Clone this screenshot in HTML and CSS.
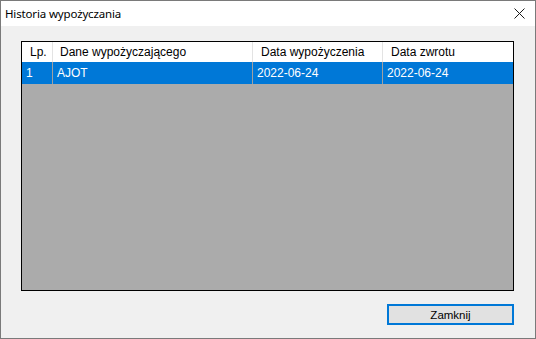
FILE: index.html
```html
<!DOCTYPE html>
<html lang="pl">
<head>
<meta charset="utf-8">
<title>Historia wypożyczania</title>
<link rel="stylesheet" href="styles.css">
</head>
<body>
<div class="window">
  <div class="titlebar">
    <span class="title">Historia wypożyczania</span>
    <svg class="close" width="11" height="11" viewBox="0 0 11 11"><path d="M0.5 0.5 L10.5 10.5 M10.5 0.5 L0.5 10.5" stroke="#1a1a1a" stroke-width="1" fill="none"/></svg>
  </div>
  <div class="content">
    <div class="grid">
      <div class="row header">
        <div class="cell c1 hc-lp">Lp.</div>
        <div class="cell c2">Dane wypożyczającego</div>
        <div class="cell c3">Data wypożyczenia</div>
        <div class="cell c4 last">Data zwrotu</div>
      </div>
      <div class="row data selected">
        <div class="cell c1">1</div>
        <div class="cell c2">AJOT</div>
        <div class="cell c3">2022-06-24</div>
        <div class="cell c4 last">2022-06-24</div>
      </div>
    </div>
    <div class="buttons">
      <button class="btn">Zamknij</button>
    </div>
  </div>
</div>
</body>
</html>
```
FILE: styles.css
```css
* { box-sizing: border-box; }
html, body { margin: 0; padding: 0; }
body { width: 536px; height: 339px; overflow: hidden; background: #f0f0f0; }

.window {
  width: 536px;
  height: 339px;
  border: 1px solid #7a7a7a;
  background: #f0f0f0;
  display: flex;
  flex-direction: column;
}

.titlebar {
  height: 25px;
  background: #ffffff;
  display: flex;
  align-items: center;
  justify-content: space-between;
  padding: 0 10px 0 4px;
}
.title {
  font-family: "Noto Sans", "Open Sans", sans-serif;
  font-size: 11.5px;
  line-height: 24px;
  color: #000;
  letter-spacing: -0.15px;
}
.close { display: block; }

.content {
  flex: 1;
  padding: 15px 21px 13px 20px;
  display: flex;
  flex-direction: column;
}

.grid {
  height: 250px;
  border: 1px solid #000;
  background: #ababab;
  font-family: "Liberation Sans", Arial, sans-serif;
  font-size: 12px;
}

.row { display: flex; }
.header { height: 20px; background: #fff; color: #000; }
.data { height: 22px; }
.selected { background: #0078d7; color: #fff; }

.cell {
  white-space: nowrap;
  overflow: hidden;
  border-right: 1px solid #e3e3e3;
}
.header .cell { line-height: 20px; padding-left: 7px; }
.data .cell { line-height: 22px; padding-left: 4px; border-right-color: #a0a0a0; }
.header .hc-lp { padding-left: 8px; }
.c1 { width: 31px; }
.c2 { width: 200px; }
.c3 { width: 130px; }
.c4 { width: 130px; }
.header .c3, .header .c4 { padding-left: 8px; }
.cell.last { border-right: none; }

.buttons {
  margin-top: 13px;
  display: flex;
  justify-content: flex-end;
}
.btn {
  width: 127px;
  height: 21px;
  border: 2px solid #0078d7;
  background: #e1e1e1;
  font-family: "Liberation Sans", Arial, sans-serif;
  font-size: 11.5px;
  color: #000;
  padding: 0;
  margin: 0;
}
```
